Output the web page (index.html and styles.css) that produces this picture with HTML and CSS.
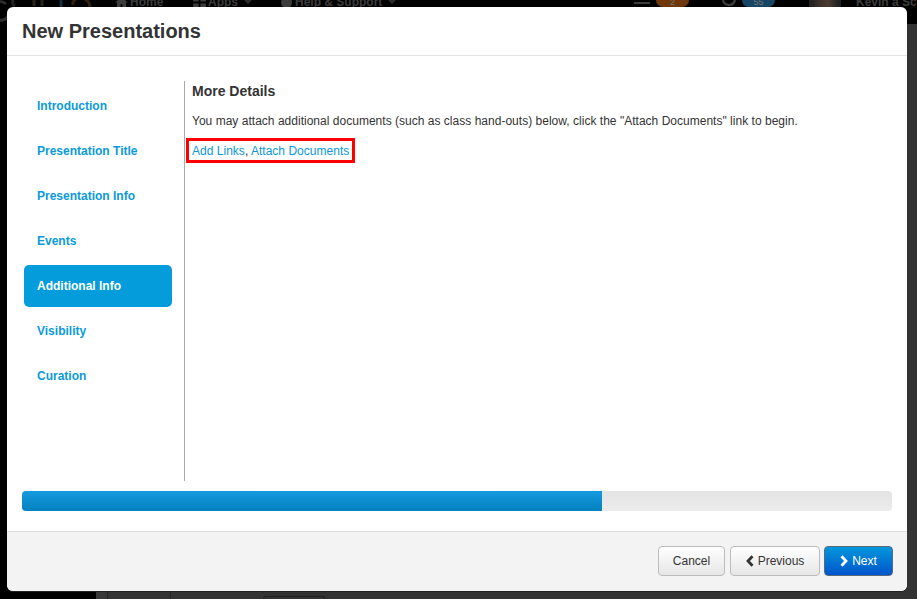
FILE: index.html
```html
<!DOCTYPE html>
<html lang="en">
<head>
<meta charset="utf-8">
<title>New Presentations</title>
<link rel="stylesheet" href="styles.css">
</head>
<body>
<div class="page">
  <header class="topbar">
    <div class="brand">
      <svg class="brand-art" viewBox="0 0 96 24">
        <g fill="none" stroke-width="3">
          <path d="M-2 20C3 21 7 19 8 16M6 4C3 1-1 1-4 4" stroke="#2e2e2e"/>
          <path d="M18 -3C12 -2 11 4 15 6" stroke="#222"/>
          <path d="M34 -3v9M42 -3v9" stroke="#2a241c"/>
          <path d="M61 -3v10" stroke="#0f2f42"/>
          <path d="M73 5C72 1 76-2 80-2M80-2C86-2 90 2 90 7" stroke="#33200e"/>
        </g>
      </svg>
    </div>
    <nav class="topnav">
      <span class="navitem home"><svg class="navicon" viewBox="0 0 14 12"><path d="M7 0 0 6h2v6h4V8h2v4h4V6h2z"/></svg>Home</span>
      <span class="navitem apps"><svg class="navicon" viewBox="0 0 14 12"><path d="M0 0h6v5H0zM8 0h6v5H8zM0 7h6v5H0zM8 7h6v5H8z"/></svg>Apps<i class="caret"></i></span>
      <span class="navitem help"><svg class="navicon" viewBox="0 0 12 12"><circle cx="6" cy="6" r="6"/></svg>Help &amp; Support<i class="caret"></i></span>
    </nav>
    <div class="topright">
      <span class="mini"></span>
      <span class="badge orange">2</span>
      <svg class="refresh" viewBox="0 0 16 7"><path d="M1 0c1 4 3 5 6 5s5-2 6-5" fill="none" stroke="#3a3a3a" stroke-width="2.500"/></svg>
      <span class="badge blue">55</span>
      <span class="avatar"></span>
      <span class="username">Kevin a Sc</span>
    </div>
  </header>
  <div class="under">
    <div class="sidebar"></div>
    <div class="content">
      <div class="cells">
        <span class="cell c1"></span>
        <span class="cell c2"></span>
        <span class="tab"></span>
      </div>
    </div>
  </div>
</div>
<div class="modal">
  <div class="modal-head"><h1>New Presentations</h1></div>
  <div class="modal-body">
    <div class="wizard">
      <ul class="steps">
        <li><a>Introduction</a></li>
        <li><a>Presentation Title</a></li>
        <li><a>Presentation Info</a></li>
        <li><a>Events</a></li>
        <li class="active"><a>Additional Info</a></li>
        <li><a>Visibility</a></li>
        <li><a>Curation</a></li>
      </ul>
      <div class="pane">
        <h2>More Details</h2>
        <p>You may attach additional documents (such as class hand-outs) below, click the "Attach Documents" link to begin.</p>
        <div class="links"><a>Add Links</a>, <a>Attach Documents</a></div>
      </div>
    </div>
    <div class="progress"><div class="bar" style="width:66.67%"></div></div>
  </div>
  <div class="modal-foot">
    <button class="btn cancel">Cancel</button>
    <button class="btn previous"><svg class="chev" viewBox="0 0 10 12"><path d="M7.500 1.200 3 6l4.500 4.800"/></svg>Previous</button>
    <button class="btn primary"><svg class="chev" viewBox="0 0 10 12"><path d="M2.500 1.200 7 6l-4.500 4.800"/></svg>Next</button>
  </div>
</div>
</body>
</html>
```
FILE: styles.css
```css
* { box-sizing: border-box; }
html, body { margin: 0; height: 100%; }
body {
  position: relative;
  width: 917px;
  height: 599px;
  overflow: hidden;
  background: #333;
  font-family: "Liberation Sans", Arial, sans-serif;
  font-size: 12px;
  color: #333;
}
.page { display: flex; flex-direction: column; height: 599px; }
.topbar {
  display: flex;
  height: 24px;
  background: #000;
  color: #3c3c3c;
  font-weight: 700;
  font-size: 12px;
  line-height: 10px;
  overflow: hidden;
}
.brand { width: 115px; height: 24px; flex: none; }
.brand-art { display: block; width: 96px; height: 24px; }
.topnav { display: flex; flex: 1; margin-top: -3px; }
.navitem { display: flex; align-items: flex-start; white-space: nowrap; }
.home { width: 78px; }
.apps { width: 87px; }
.navicon { width: 13px; height: 11px; margin-right: 2px; fill: #3c3c3c; flex: none; }
.caret { width: 0; height: 0; margin: 3px 0 0 6px; border: 4px solid transparent; border-top-color: #2a2a2a; border-bottom: 0; }
.topright { display: flex; width: 283px; flex: none; }
.mini { width: 16px; height: 2px; margin: 2px 6px 0 0; background: #3d3d3d; flex: none; }
.badge { width: 33px; height: 7px; flex: none; border-radius: 0 0 14px 14px; font-size: 9px; line-height: 5px; font-weight: 400; text-align: center; color: #777; }
.orange { background: #70380a; }
.refresh { width: 16px; height: 7px; margin: 0 4px 0 33px; flex: none; }
.blue { background: #174566; }
.avatar { width: 32px; height: 7px; margin: 0 15px 0 34px; flex: none; background: linear-gradient(90deg, #222 0 10%, #3a2f2a 30%, #4a3a30 60%, #222 90%); }
.username { white-space: nowrap; margin-top: -3px; }
.under { flex: 1; display: flex; }
.sidebar { width: 96px; background: #000; flex: none; }
.content { flex: 1; display: flex; flex-direction: column; justify-content: flex-end; background: #333; }
.cells { display: flex; height: 8px; position: relative; }
.cell { border-right: 1px solid #262626; height: 8px; background: #383838; }
.c1 { width: 12px; }
.c2 { width: 63px; background: #333; }
.tab { width: 62px; height: 3px; margin: 5px 0 0 92px; border: 1px solid #222; border-bottom: 0; border-radius: 3px 3px 0 0; }
.modal {
  position: absolute;
  left: 7px;
  top: 7px;
  width: 900px;
  height: 584px;
  display: flex;
  flex-direction: column;
  background: #fff;
  border-radius: 6px;
  overflow: hidden;
  box-shadow: 0 1px 0 #222;
}
.modal-head {
  height: 49px;
  padding: 0 15px;
  border-bottom: 1px solid #e5e5e5;
  display: flex;
  align-items: center;
}
h1 { margin: 0; font-size: 20px; font-weight: 700; color: #333; }
.modal-body { flex: 1; padding: 25px 15px 20px; display: flex; flex-direction: column; }
.wizard { display: flex; height: 400px; }
.steps { list-style: none; margin: 0; padding: 4px 12px 0 2px; width: 162px; display: flex; flex-direction: column; gap: 3px; }
.steps li { height: 42px; }
.steps a {
  display: flex;
  align-items: center;
  height: 100%;
  padding-left: 13px;
  border-radius: 5px;
  font-weight: 700;
  color: #0a9ad9;
}
.steps .active a { background: #049cdb; color: #fff; }
.pane { flex: 1; border-left: 1px solid #aaa; padding-left: 7px; letter-spacing: .018px; }
h2 { margin: 2px 0 0; font-size: 14px; line-height: 16px; font-weight: 700; color: #333; letter-spacing: 0; }
.pane p { margin: 14px 0 0; line-height: 16px; }
.links {
  display: inline-block;
  margin: 9px 0 0 -6px;
  padding: 1px 3px 0;
  border: 3px solid #f00;
  line-height: 18px;
  color: #333;
}
.links a { color: #0a96d8; }
.progress { margin-top: 10px; height: 20px; border-radius: 4px; background: linear-gradient(#e4e4e4, #ececec); overflow: hidden; }
.bar { height: 100%; background: linear-gradient(#149bdf, #0480be); }
.modal-foot {
  height: 60px;
  display: flex;
  justify-content: flex-end;
  align-items: flex-start;
  padding: 14px 14px 0 0;
  background: #f3f3f3;
  border-top: 1px solid #ddd;
}
.btn {
  height: 30px;
  padding: 0;
  display: inline-flex;
  align-items: center;
  justify-content: center;
  font: 12px "Liberation Sans", Arial, sans-serif;
  color: #333;
  background: linear-gradient(#fff, #e6e6e6);
  border: 1px solid #bbb;
  border-radius: 4px;
}
.cancel { width: 67px; margin-right: 5px; }
.previous { width: 90px; margin-right: 4px; }
.primary {
  width: 69px;
  color: #fff;
  background: linear-gradient(#0397db, #0055cc);
  border-color: #5a6a78;
}
.chev { width: 10px; height: 12px; margin: 0 3px 0 -1px; fill: none; stroke: currentColor; stroke-width: 2.800; }
```
